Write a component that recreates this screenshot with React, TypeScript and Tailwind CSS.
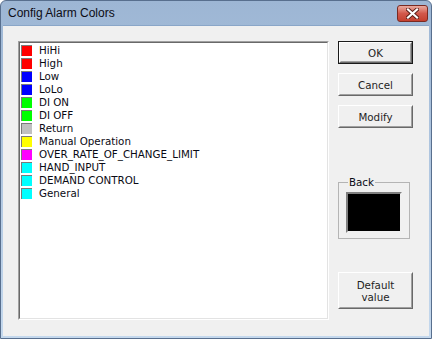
import React from 'react'

const alarmItems = [
  { label: 'HiHi', swatch: 'bg-[#ff0000]' },
  { label: 'High', swatch: 'bg-[#ff0000]' },
  { label: 'Low', swatch: 'bg-[#0000ff]' },
  { label: 'LoLo', swatch: 'bg-[#0000ff]' },
  { label: 'DI ON', swatch: 'bg-[#00ff00]' },
  { label: 'DI OFF', swatch: 'bg-[#00ff00]' },
  { label: 'Return', swatch: 'bg-[#c0c0c0]' },
  { label: 'Manual Operation', swatch: 'bg-[#ffff00]' },
  { label: 'OVER_RATE_OF_CHANGE_LIMIT', swatch: 'bg-[#ff00ff]' },
  { label: 'HAND_INPUT', swatch: 'bg-[#00ffff]' },
  { label: 'DEMAND CONTROL', swatch: 'bg-[#00ffff]' },
  { label: 'General', swatch: 'bg-[#00ffff]' },
]

function WinButton({ children, isDefault = false, tall = false }: { children: React.ReactNode; isDefault?: boolean; tall?: boolean }) {
  return (
    <div className={`${tall ? 'h-[37px]' : 'h-[23px]'} w-[75px] ${isDefault ? 'border border-[#1a1a1a]' : ''}`}>
      <div className="h-full border border-t-white border-l-white border-b-[#696969] border-r-[#696969]">
        <div className="flex h-full flex-col items-center justify-center border border-t-[#f0f0f0] border-l-[#f0f0f0] border-b-[#a0a0a0] border-r-[#a0a0a0] bg-[#f0f0f0] font-['DejaVu_Sans',sans-serif] text-[10.3px] leading-[12px] text-[#1e1e1e]">
          {children}
        </div>
      </div>
    </div>
  )
}

export default function App() {
  return (
    <div className="h-[339px] w-[432px] bg-white font-['DejaVu_Sans',sans-serif]">
      <div className="flex h-full flex-col rounded-t-[6px] border border-[#586f8e] bg-gradient-to-b from-[#9db6d4] to-[#c4d8ed]">
        {/* Title bar */}
        <div className="flex h-[24px] shrink-0 items-start justify-between pl-[7px] pr-[3px]">
          <span className="pt-[5px] font-['Liberation_Sans',Arial,sans-serif] text-[12px] leading-[15px] text-[#0c0c14]">Config Alarm Colors</span>
          <div className="mt-[4px] flex h-[17px] w-[31px] items-center justify-center rounded-[3px] border border-[#7a2a22] bg-gradient-to-b from-[#e9a99f] via-[#d2584b] to-[#c4402f]">
            <svg width="13" height="11" viewBox="0 0 13 11">
              <path d="M2 1.5 L11 9.5 M11 1.5 L2 9.5" stroke="#5a1d17" strokeWidth="4" strokeLinecap="square" />
              <path d="M2 1.5 L11 9.5 M11 1.5 L2 9.5" stroke="#ffffff" strokeWidth="2.2" strokeLinecap="square" />
            </svg>
          </div>
        </div>

        {/* Client area */}
        <div className="mx-[2px] mb-[2px] flex flex-1 border-t border-[#8aa6c8] bg-[#f0f0f0] pl-[15px] pt-[15px]">
          {/* List box */}
          <div className="h-[279px] w-[311px] border border-t-[#a0a0a0] border-l-[#a0a0a0] border-b-white border-r-white">
            <div className="h-full border border-t-[#696969] border-l-[#696969] border-b-[#e3e3e3] border-r-[#e3e3e3] bg-white pl-[1px] pt-[1px]">
              {alarmItems.map((item) => (
                <div key={item.label} className="flex h-[13px] items-center">
                  <span className={`h-[11px] w-[11px] border-l border-t border-[#7a7a7a] ${item.swatch}`} />
                  <span className="ml-[7px] text-[10.3px] leading-[13px] text-[#0a0a14]">{item.label}</span>
                </div>
              ))}
            </div>
          </div>

          {/* Right column */}
          <div className="ml-[9px] flex flex-col">
            <WinButton isDefault>OK</WinButton>
            <div className="mt-[9px]">
              <WinButton>Cancel</WinButton>
            </div>
            <div className="mt-[9px]">
              <WinButton>Modify</WinButton>
            </div>

            <fieldset className="mt-[48px] h-[63px] w-[71px] border border-[#b4b4b4] px-[7px]">
              <legend className="ml-[2px] px-[1px] text-[10.3px] leading-[13px] text-[#0a0a14]">Back</legend>
              <div className="mt-[3px] h-[41px] w-[56px] border-2 border-t-[#808080] border-l-[#808080] border-b-[#f0f0f0] border-r-[#f0f0f0] bg-black" />
            </fieldset>

            <div className="mt-[33px]">
              <WinButton tall>
                <span>Default</span>
                <span>value</span>
              </WinButton>
            </div>
          </div>
        </div>
      </div>
    </div>
  )
}
